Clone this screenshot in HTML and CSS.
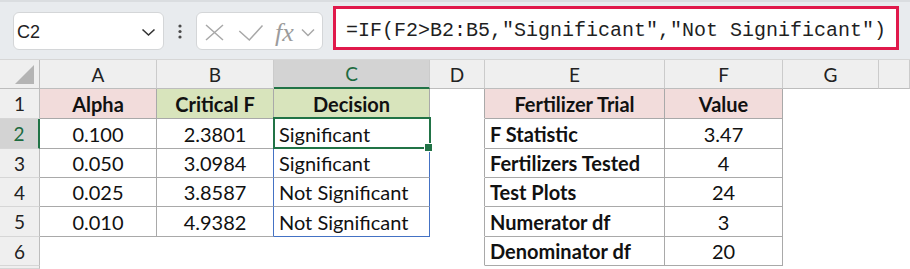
FILE: index.html
```html
<!DOCTYPE html>
<html lang="en">
<head>
	<meta charset="UTF-8">
	<title>Fertilizer Trial - F test</title>
	<link rel="stylesheet" href="styles.css">
</head>
<body>
	<div class="toolbar">
		<div class="namebox">
			<span>C2</span>
			<svg width="15" height="9" viewBox="0 0 15 9"><polyline points="1.5,1.5 7.5,7 13.5,1.5" fill="none" stroke="#333" stroke-width="1.6"/></svg>
		</div>
		<div class="dots">
			<svg width="4" height="15" viewBox="0 0 4 15"><circle cx="2" cy="2" r="1.6" fill="#4a4a4a"/><circle cx="2" cy="7.5" r="1.6" fill="#4a4a4a"/><circle cx="2" cy="13" r="1.6" fill="#4a4a4a"/></svg>
		</div>
		<div class="fxbox">
			<svg class="ic-x" width="19" height="17" viewBox="0 0 19 17"><path d="M1 1 L18 16 M18 1 L1 16" stroke="#a8a8a8" stroke-width="1.5" fill="none"/></svg>
			<svg class="ic-ok" width="26" height="18" viewBox="0 0 26 18"><polyline points="1.3,7 11.3,16 24.5,1.5" fill="none" stroke="#a8a8a8" stroke-width="1.5"/></svg>
			<span class="fx">fx</span>
			<svg class="ic-down" width="14" height="9" viewBox="0 0 14 9"><polyline points="1,1.5 7,7.5 13,1.5" fill="none" stroke="#a8a8a8" stroke-width="1.5"/></svg>
		</div>
		<div class="formula">=IF(F2&gt;B2:B5,"Significant","Not Significant")</div>
	</div>

	<div class="sheet">
		<div class="corner"><svg width="20" height="20" viewBox="0 0 20 20"><polygon points="19,0 19,19 0,19" fill="#b4b4b4"/></svg></div>
		<div class="ch">A</div>
		<div class="ch">B</div>
		<div class="ch sel">C</div>
		<div class="ch">D</div>
		<div class="ch">E</div>
		<div class="ch">F</div>
		<div class="ch">G</div>
		<div class="ch"></div>

		<div class="rh">1</div>
		<div class="c t ctr b pink">Alpha</div>
		<div class="c t ctr b olive">Critical F</div>
		<div class="c t ctr b olive">Decision</div>
		<div class="c edge"></div>
		<div class="c t ctr b pink">Fertilizer Trial</div>
		<div class="c t ctr b pink">Value</div>
		<div class="c"></div>
		<div class="c"></div>

		<div class="rh sel">2</div>
		<div class="c t ctr">0.100</div>
		<div class="c t ctr">2.3801</div>
		<div class="c t active">Significant<span class="handle"></span></div>
		<div class="c edge"></div>
		<div class="c t b">F Statistic</div>
		<div class="c t ctr">3.47</div>
		<div class="c"></div>
		<div class="c"></div>

		<div class="rh">3</div>
		<div class="c t ctr">0.050</div>
		<div class="c t ctr blue-r">3.0984</div>
		<div class="c t blue-r">Significant</div>
		<div class="c edge"></div>
		<div class="c t b">Fertilizers Tested</div>
		<div class="c t ctr">4</div>
		<div class="c"></div>
		<div class="c"></div>

		<div class="rh">4</div>
		<div class="c t ctr">0.025</div>
		<div class="c t ctr blue-r">3.8587</div>
		<div class="c t blue-r">Not Significant</div>
		<div class="c edge"></div>
		<div class="c t b">Test Plots</div>
		<div class="c t ctr">24</div>
		<div class="c"></div>
		<div class="c"></div>

		<div class="rh">5</div>
		<div class="c t ctr">0.010</div>
		<div class="c t ctr blue-r">4.9382</div>
		<div class="c t blue-r blue-b">Not Significant</div>
		<div class="c edge"></div>
		<div class="c t b">Numerator df</div>
		<div class="c t ctr">3</div>
		<div class="c"></div>
		<div class="c"></div>

		<div class="rh">6</div>
		<div class="c"></div>
		<div class="c"></div>
		<div class="c"></div>
		<div class="c edge"></div>
		<div class="c t b">Denominator df</div>
		<div class="c t ctr">20</div>
		<div class="c"></div>
		<div class="c"></div>

		<div class="rh"></div>
	</div>
</body>
</html>
```

FILE: styles.css
```css
body {
	margin: 0;
	width: 910px;
	height: 269px;
	overflow: hidden;
	background-color: #fff;
	font-family: Lato, "Liberation Sans", sans-serif;
	color: #111;
}

/* formula bar */

.toolbar {
	height: 60px;
	box-sizing: border-box;
	background-color: #e8ebee;
	border-top: 2px solid #dadde0;
	border-bottom: 1px solid #d6d6d6;
	display: flex;
	align-items: flex-end;
	padding: 0 0 9px 13px;
}

.namebox,
.fxbox {
	height: 38px;
	box-sizing: border-box;
	background-color: #fff;
	border: 1px solid #d4d6d8;
	border-radius: 6px;
	display: flex;
	align-items: center;
	padding-top: 3px;
}

.namebox {
	width: 151px;
	padding-left: 3px;
	padding-right: 7px;
	font-family: "Liberation Sans", sans-serif;
	font-size: 18px;
	color: #222;
}

.namebox span {
	flex: 1;
}

.dots {
	width: 32px;
	height: 38px;
	display: flex;
	justify-content: center;
	align-items: center;
	padding-top: 2px;
}

.fxbox {
	width: 127px;
	padding-left: 8px;
}

.ic-ok {
	margin-left: 14px;
}

.fx {
	margin-left: 11px;
	font-family: "Liberation Serif", serif;
	font-style: italic;
	font-size: 26px;
	line-height: 1;
	color: #9c9c9c;
}

.ic-down {
	margin-left: 7px;
}

.formula {
	margin-left: 10px;
	width: 566px;
	height: 44px;
	box-sizing: border-box;
	border: 3px solid #e0194b;
	background-color: #fff;
	display: flex;
	align-items: center;
	padding: 5px 0 0 10px;
	font-family: "Liberation Mono", monospace;
	font-size: 20px;
	color: #1f1f1f;
	white-space: pre;
}

/* grid */

.sheet {
	display: grid;
	grid-template-columns: 40px 117px 117px 156px 55px 180px 118px 96px 1fr;
	grid-template-rows: 29px 30px 30px 29px 29px 30px 29px 3px;
	font-size: 20px;
}

.corner,
.ch,
.rh {
	background-color: #efefef;
	box-sizing: border-box;
	display: flex;
	justify-content: center;
	align-items: center;
	font-size: 19px;
	color: #222;
}

.corner {
	justify-content: flex-end;
	align-items: flex-end;
	padding: 0 4px 3px 0;
	border-right: 1px solid #bdbdbd;
	border-bottom: 1px solid #bdbdbd;
}

.ch {
	border-right: 1px solid #cbcbcb;
	border-bottom: 1px solid #bdbdbd;
}

.ch.sel {
	background-color: #d3d3d3;
	color: #1d6b3f;
	border-bottom: 2px solid #217346;
}

.rh {
	border-right: 1px solid #bdbdbd;
	border-bottom: 1px solid #d6d6d6;
}

.rh.sel {
	background-color: #d3d3d3;
	color: #1d6b3f;
	border-right: 2px solid #217346;
}

.c {
	box-sizing: border-box;
	border-right: 1px solid transparent;
	border-bottom: 1px solid transparent;
	display: flex;
	align-items: center;
	padding: 0 5px;
	white-space: nowrap;
	overflow: hidden;
}

.t {
	border-right-color: #a9a9a9;
	border-bottom-color: #a9a9a9;
}

.edge {
	border-right-color: #a9a9a9;
}

.ctr {
	justify-content: center;
}

.b {
	font-weight: 700;
}

.pink {
	background-color: #f2dcdb;
}

.olive {
	background-color: #d8e4bc;
}

.blue-r {
	border-right-color: #4472c4;
}

.blue-b {
	border-bottom-color: #4472c4;
}

.active {
	position: relative;
	overflow: visible;
}

.active::after {
	content: "";
	position: absolute;
	left: -1px;
	top: -2px;
	right: -2px;
	bottom: -1px;
	border: 2px solid #217346;
}

.handle {
	position: absolute;
	right: -3px;
	bottom: -3px;
	width: 7px;
	height: 7px;
	box-sizing: border-box;
	background-color: #217346;
	outline: 1px solid #fff;
	z-index: 2;
}
```
